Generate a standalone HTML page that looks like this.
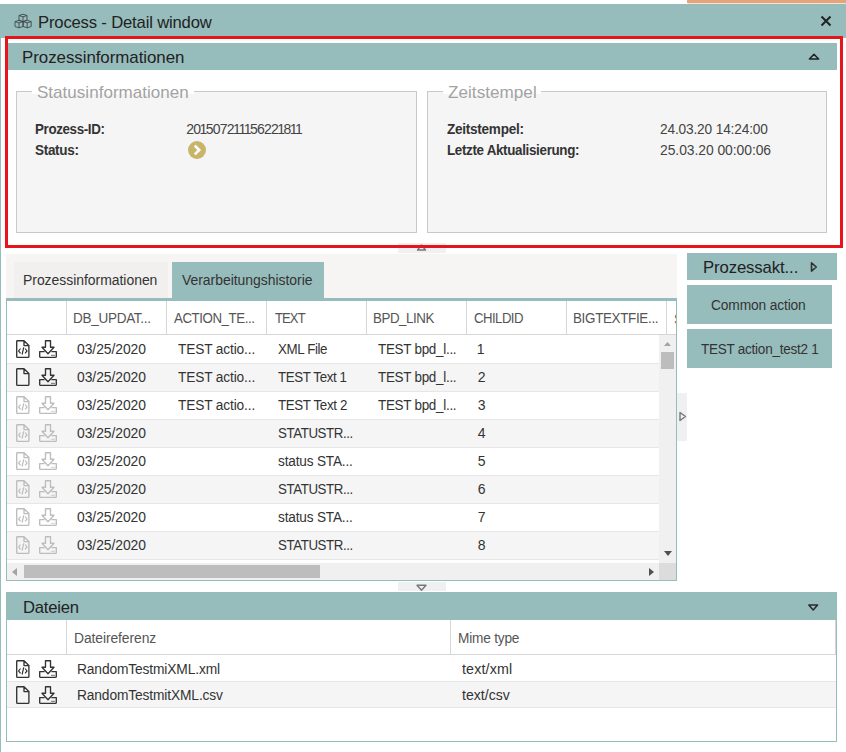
<!DOCTYPE html>
<html><head><meta charset="utf-8">
<style>
*{box-sizing:border-box;margin:0;padding:0}
html,body{width:846px;height:752px;overflow:hidden;background:#fff;font-family:"Liberation Sans",sans-serif;color:#333}
.a{position:absolute}
.t{position:absolute;white-space:nowrap;line-height:1}
svg{overflow:visible}
</style></head><body>
<div class="a" style="left:687px;top:0px;width:159px;height:3px;background:#e6a47a"></div>
<div class="a" style="left:688px;top:3px;width:158px;height:1px;background:#f3e2d6"></div>
<div class="a" style="left:0px;top:4px;width:846px;height:34px;background:#97bcbc"></div>
<svg class="a" style="left:14px;top:12px" width="18" height="17" viewBox="0 0 18 17"><path d="M5 3.5 L9 2.2 L13 3.5 L9 4.800000000000001 Z M5 3.5 V8.4 L9 9.7 L13 8.4 V3.5 M9 4.800000000000001 V9.7" fill="none" stroke="#3a4242" stroke-width="0.85" stroke-linejoin="round"/><path d="M1 9.600000000000001 L5 8.3 L9 9.600000000000001 L5 10.9 Z M1 9.600000000000001 V14.5 L5 15.8 L9 14.5 V9.600000000000001 M5 10.9 V15.8" fill="none" stroke="#3a4242" stroke-width="0.85" stroke-linejoin="round"/><path d="M9.2 9.600000000000001 L13.2 8.3 L17.2 9.600000000000001 L13.2 10.9 Z M9.2 9.600000000000001 V14.5 L13.2 15.8 L17.2 14.5 V9.600000000000001 M13.2 10.9 V15.8" fill="none" stroke="#3a4242" stroke-width="0.85" stroke-linejoin="round"/></svg>
<div class="t" style="left:38.42px;top:13.51px;font-size:17px;color:#222;font-weight:normal;letter-spacing:-0.177px;transform:scaleX(0.9790);transform-origin:0 0;">Process - Detail window</div>
<svg class="a" style="left:820px;top:15px" width="12" height="12" viewBox="0 0 12 12"><path d="M1.5 1.5L10.5 10.5M10.5 1.5L1.5 10.5" stroke="#222" stroke-width="2"/></svg>
<div class="a" style="left:0px;top:38px;width:1px;height:714px;background:#97bcbc"></div>
<div class="a" style="left:8px;top:43px;width:829px;height:27px;background:#97bcbc"></div>
<div class="t" style="left:21.51px;top:49.11px;font-size:17px;color:#222;font-weight:normal;letter-spacing:-0.052px;transform:scaleX(0.9940);transform-origin:0 0;">Prozessinformationen</div>
<svg class="a" style="left:808px;top:52px" width="12" height="9" viewBox="0 0 12 9"><path d="M6 2.3L10.6 7.1H1.4Z" fill="none" stroke="#222" stroke-width="1.5" stroke-linejoin="round"/></svg>
<div class="a" style="left:16px;top:91px;width:401px;height:142px;background:#f5f5f5;border:1px solid #c9c9c9"></div>
<div class="a" style="left:32px;top:84px;width:162px;height:10px;background:#fff"></div>
<div class="t" style="left:37.20px;top:83.61px;font-size:17px;color:#a3a3a3;font-weight:normal;letter-spacing:0.015px;transform:scaleX(1.0018);transform-origin:0 0;">Statusinformationen</div>
<div class="t" style="left:35.30px;top:122.25px;font-size:14px;color:#333;font-weight:bold;letter-spacing:-0.370px;transform:scaleX(0.9538);transform-origin:0 0;">Prozess-ID:</div>
<div class="t" style="left:35.30px;top:143.15px;font-size:14px;color:#333;font-weight:bold;letter-spacing:-0.302px;transform:scaleX(0.9627);transform-origin:0 0;">Status:</div>
<div class="t" style="left:186.30px;top:122.15px;font-size:14px;color:#444;font-weight:normal;letter-spacing:-0.750px;">20<span style="margin:0 -0.85px">1</span>5072<span style="margin:0 -0.85px">1</span><span style="margin:0 -0.85px">1</span><span style="margin:0 -0.85px">1</span>5622<span style="margin:0 -0.85px">1</span>8<span style="margin:0 -0.85px">1</span><span style="margin:0 -0.85px">1</span></div>
<svg class="a" style="left:188px;top:141px" width="18" height="18" viewBox="0 0 18 18"><circle cx="9" cy="9" r="9" fill="#c9b46a"/><path d="M6.8 4.6L11.2 9L6.8 13.4" fill="none" stroke="#fff" stroke-width="2.6"/></svg>
<div class="a" style="left:427px;top:91px;width:400px;height:142px;background:#f5f5f5;border:1px solid #c9c9c9"></div>
<div class="a" style="left:443px;top:84px;width:98px;height:10px;background:#fff"></div>
<div class="t" style="left:448.40px;top:83.61px;font-size:17px;color:#a3a3a3;font-weight:normal;letter-spacing:0.040px;transform:scaleX(1.0047);transform-origin:0 0;">Zeitstempel</div>
<div class="t" style="left:446.50px;top:122.15px;font-size:14px;color:#333;font-weight:bold;letter-spacing:-0.259px;transform:scaleX(0.9664);transform-origin:0 0;">Zeitstempel:</div>
<div class="t" style="left:446.50px;top:143.15px;font-size:14px;color:#333;font-weight:bold;letter-spacing:-0.329px;transform:scaleX(0.9547);transform-origin:0 0;">Letzte Aktualisierung:</div>
<div class="t" style="left:660.20px;top:122.15px;font-size:14px;color:#444;font-weight:normal;letter-spacing:-0.160px;transform:scaleX(0.9779);transform-origin:0 0;">24.03.20 14:24:00</div>
<div class="t" style="left:660.20px;top:143.15px;font-size:14px;color:#444;font-weight:normal;letter-spacing:-0.057px;transform:scaleX(0.9921);transform-origin:0 0;">25.03.20 00:00:06</div>
<div class="a" style="left:398px;top:243px;width:48px;height:10px;background:#f0f0f0"></div>
<svg class="a" style="left:416px;top:244px" width="11" height="7" viewBox="0 0 11 7"><path d="M5.5 1L9.5 6H1.5Z" fill="none" stroke="#777" stroke-width="1.4" stroke-linejoin="round"/></svg>
<div class="a" style="left:5px;top:36px;width:838px;height:212px;border:3px solid #e8141c"></div>
<div class="a" style="left:6px;top:254px;width:671px;height:44px;background:#f6f5f3"></div>
<div class="a" style="left:14px;top:262px;width:154px;height:36px;background:#f1f0ee"></div>
<div class="t" style="left:23.40px;top:272.95px;font-size:14px;color:#333;font-weight:normal;letter-spacing:-0.027px;transform:scaleX(0.9962);transform-origin:0 0;">Prozessinformationen</div>
<div class="a" style="left:172px;top:262px;width:152px;height:36px;background:#97bcbc"></div>
<div class="t" style="left:182.40px;top:273.15px;font-size:14px;color:#333;font-weight:normal;letter-spacing:-0.026px;transform:scaleX(0.9961);transform-origin:0 0;">Verarbeitungshistorie</div>
<div class="a" style="left:6px;top:298px;width:671px;height:283px;border:1px solid #97bcbc;border-top:3px solid #97bcbc;background:#fff"></div>
<div class="a" style="left:7px;top:334px;width:669px;height:1px;background:#d6d6d6"></div>
<div class="a" style="left:66px;top:301px;width:1px;height:33px;background:#d6d6d6"></div>
<div class="a" style="left:166px;top:301px;width:1px;height:33px;background:#d6d6d6"></div>
<div class="a" style="left:266px;top:301px;width:1px;height:33px;background:#d6d6d6"></div>
<div class="a" style="left:366px;top:301px;width:1px;height:33px;background:#d6d6d6"></div>
<div class="a" style="left:466px;top:301px;width:1px;height:33px;background:#d6d6d6"></div>
<div class="a" style="left:566px;top:301px;width:1px;height:33px;background:#d6d6d6"></div>
<div class="a" style="left:666px;top:301px;width:1px;height:33px;background:#d6d6d6"></div>
<div class="t" style="left:73.23px;top:311.05px;font-size:14px;color:#555;font-weight:normal;letter-spacing:-0.294px;transform:scaleX(0.9654);transform-origin:0 0;">DB_UPDAT...</div>
<div class="t" style="left:174.20px;top:311.05px;font-size:14px;color:#555;font-weight:normal;letter-spacing:-0.448px;transform:scaleX(0.9477);transform-origin:0 0;">ACTION_TE...</div>
<div class="t" style="left:274.50px;top:311.05px;font-size:14px;color:#555;font-weight:normal;letter-spacing:-0.939px;transform:scaleX(0.9279);transform-origin:0 0;">TEXT</div>
<div class="t" style="left:373.35px;top:311.05px;font-size:14px;color:#555;font-weight:normal;letter-spacing:-0.477px;transform:scaleX(0.9528);transform-origin:0 0;">BPD_LINK</div>
<div class="t" style="left:474.40px;top:311.05px;font-size:14px;color:#555;font-weight:normal;letter-spacing:-0.575px;transform:scaleX(0.9419);transform-origin:0 0;">CHILDID</div>
<div class="t" style="left:573.44px;top:311.05px;font-size:14px;color:#555;font-weight:normal;letter-spacing:-0.337px;transform:scaleX(0.9576);transform-origin:0 0;">BIGTEXTFIE...</div>
<div class="a" style="left:667px;top:301px;width:9px;height:33px;overflow:hidden"><div class="t" style="left:7px;top:10.5px;font-size:14px;color:#555">S</div></div>
<div class="a" style="left:7px;top:336px;width:652px;height:28px;background:#fff;border-bottom:1px solid #e6e6e6"></div>
<svg class="a" style="left:16px;top:340px" width="14" height="18" viewBox="0 0 14 18"><path d="M1.5 0.7H8L12.9 5.6V16.4Q12.9 17.3 12 17.3H1.5Q0.7 17.3 0.7 16.4V1.5Q0.7 0.7 1.5 0.7Z M8 0.7V5.6H12.9" fill="none" stroke="#333" stroke-width="1.35" stroke-linejoin="round"/><path d="M4.5 8.5L2.6 10.9L4.5 13.3M9.1 8.5L11 10.9L9.1 13.3M7.7 7.3L6.1 14.5" fill="none" stroke="#333" stroke-width="1.2"/></svg>
<svg class="a" style="left:39px;top:340px" width="18" height="18" viewBox="0 0 18 18"><path d="M6.5 0.7H11.5V7.2H15L9 13.8L3 7.2H6.5Z" fill="none" stroke="#333" stroke-width="1.35" stroke-linejoin="round"/><path d="M5.6 11.6H0.7V16.4Q0.7 17.3 1.6 17.3H16.4Q17.3 17.3 17.3 16.4V11.6H12.4" fill="none" stroke="#333" stroke-width="1.35" stroke-linejoin="round"/><path d="M12.2 15.3H15.8" stroke="#333" stroke-width="0.9" stroke-dasharray="1.6 0.4"/></svg>
<div class="t" style="left:77.00px;top:342.15px;font-size:14px;color:#333;font-weight:normal;letter-spacing:-0.061px;transform:scaleX(0.9923);transform-origin:0 0;">03/25/2020</div>
<div class="t" style="left:177.70px;top:342.15px;font-size:14px;color:#333;font-weight:normal;letter-spacing:-0.146px;transform:scaleX(0.9786);transform-origin:0 0;">TEST actio...</div>
<div class="t" style="left:277.70px;top:342.15px;font-size:14px;color:#333;font-weight:normal;letter-spacing:-0.393px;transform:scaleX(0.9527);transform-origin:0 0;">XML File</div>
<div class="t" style="left:377.70px;top:342.15px;font-size:14px;color:#333;font-weight:normal;letter-spacing:-0.291px;transform:scaleX(0.9604);transform-origin:0 0;">TEST bpd_l...</div>
<div class="t" style="left:476.80px;top:342.15px;font-size:14px;color:#333;font-weight:normal;letter-spacing:0.000px;">1</div>
<div class="a" style="left:7px;top:364px;width:652px;height:28px;background:#f5f5f5;border-bottom:1px solid #e6e6e6"></div>
<svg class="a" style="left:16px;top:368px" width="14" height="18" viewBox="0 0 14 18"><path d="M1.5 0.7H8L12.9 5.6V16.4Q12.9 17.3 12 17.3H1.5Q0.7 17.3 0.7 16.4V1.5Q0.7 0.7 1.5 0.7Z M8 0.7V5.6H12.9" fill="none" stroke="#333" stroke-width="1.35" stroke-linejoin="round"/></svg>
<svg class="a" style="left:39px;top:368px" width="18" height="18" viewBox="0 0 18 18"><path d="M6.5 0.7H11.5V7.2H15L9 13.8L3 7.2H6.5Z" fill="none" stroke="#333" stroke-width="1.35" stroke-linejoin="round"/><path d="M5.6 11.6H0.7V16.4Q0.7 17.3 1.6 17.3H16.4Q17.3 17.3 17.3 16.4V11.6H12.4" fill="none" stroke="#333" stroke-width="1.35" stroke-linejoin="round"/><path d="M12.2 15.3H15.8" stroke="#333" stroke-width="0.9" stroke-dasharray="1.6 0.4"/></svg>
<div class="t" style="left:77.00px;top:370.15px;font-size:14px;color:#333;font-weight:normal;letter-spacing:-0.061px;transform:scaleX(0.9923);transform-origin:0 0;">03/25/2020</div>
<div class="t" style="left:177.70px;top:370.15px;font-size:14px;color:#333;font-weight:normal;letter-spacing:-0.146px;transform:scaleX(0.9786);transform-origin:0 0;">TEST actio...</div>
<div class="t" style="left:277.70px;top:370.15px;font-size:14px;color:#333;font-weight:normal;letter-spacing:-0.396px;transform:scaleX(0.9512);transform-origin:0 0;">TEST Text 1</div>
<div class="t" style="left:377.70px;top:370.15px;font-size:14px;color:#333;font-weight:normal;letter-spacing:-0.291px;transform:scaleX(0.9604);transform-origin:0 0;">TEST bpd_l...</div>
<div class="t" style="left:477.80px;top:370.15px;font-size:14px;color:#333;font-weight:normal;letter-spacing:0.000px;">2</div>
<div class="a" style="left:7px;top:392px;width:652px;height:28px;background:#fff;border-bottom:1px solid #e6e6e6"></div>
<svg class="a" style="left:16px;top:396px" width="14" height="18" viewBox="0 0 14 18"><path d="M1.5 0.7H8L12.9 5.6V16.4Q12.9 17.3 12 17.3H1.5Q0.7 17.3 0.7 16.4V1.5Q0.7 0.7 1.5 0.7Z M8 0.7V5.6H12.9" fill="none" stroke="#bdbdbd" stroke-width="1.35" stroke-linejoin="round"/><path d="M4.5 8.5L2.6 10.9L4.5 13.3M9.1 8.5L11 10.9L9.1 13.3M7.7 7.3L6.1 14.5" fill="none" stroke="#bdbdbd" stroke-width="1.2"/></svg>
<svg class="a" style="left:39px;top:396px" width="18" height="18" viewBox="0 0 18 18"><path d="M6.5 0.7H11.5V7.2H15L9 13.8L3 7.2H6.5Z" fill="none" stroke="#bdbdbd" stroke-width="1.35" stroke-linejoin="round"/><path d="M5.6 11.6H0.7V16.4Q0.7 17.3 1.6 17.3H16.4Q17.3 17.3 17.3 16.4V11.6H12.4" fill="none" stroke="#bdbdbd" stroke-width="1.35" stroke-linejoin="round"/><path d="M12.2 15.3H15.8" stroke="#bdbdbd" stroke-width="0.9" stroke-dasharray="1.6 0.4"/></svg>
<div class="t" style="left:77.00px;top:398.15px;font-size:14px;color:#333;font-weight:normal;letter-spacing:-0.061px;transform:scaleX(0.9923);transform-origin:0 0;">03/25/2020</div>
<div class="t" style="left:177.70px;top:398.15px;font-size:14px;color:#333;font-weight:normal;letter-spacing:-0.146px;transform:scaleX(0.9786);transform-origin:0 0;">TEST actio...</div>
<div class="t" style="left:277.70px;top:398.15px;font-size:14px;color:#333;font-weight:normal;letter-spacing:-0.379px;transform:scaleX(0.9532);transform-origin:0 0;">TEST Text 2</div>
<div class="t" style="left:377.70px;top:398.15px;font-size:14px;color:#333;font-weight:normal;letter-spacing:-0.291px;transform:scaleX(0.9604);transform-origin:0 0;">TEST bpd_l...</div>
<div class="t" style="left:477.80px;top:398.15px;font-size:14px;color:#333;font-weight:normal;letter-spacing:0.000px;">3</div>
<div class="a" style="left:7px;top:420px;width:652px;height:28px;background:#f5f5f5;border-bottom:1px solid #e6e6e6"></div>
<svg class="a" style="left:16px;top:424px" width="14" height="18" viewBox="0 0 14 18"><path d="M1.5 0.7H8L12.9 5.6V16.4Q12.9 17.3 12 17.3H1.5Q0.7 17.3 0.7 16.4V1.5Q0.7 0.7 1.5 0.7Z M8 0.7V5.6H12.9" fill="none" stroke="#bdbdbd" stroke-width="1.35" stroke-linejoin="round"/><path d="M4.5 8.5L2.6 10.9L4.5 13.3M9.1 8.5L11 10.9L9.1 13.3M7.7 7.3L6.1 14.5" fill="none" stroke="#bdbdbd" stroke-width="1.2"/></svg>
<svg class="a" style="left:39px;top:424px" width="18" height="18" viewBox="0 0 18 18"><path d="M6.5 0.7H11.5V7.2H15L9 13.8L3 7.2H6.5Z" fill="none" stroke="#bdbdbd" stroke-width="1.35" stroke-linejoin="round"/><path d="M5.6 11.6H0.7V16.4Q0.7 17.3 1.6 17.3H16.4Q17.3 17.3 17.3 16.4V11.6H12.4" fill="none" stroke="#bdbdbd" stroke-width="1.35" stroke-linejoin="round"/><path d="M12.2 15.3H15.8" stroke="#bdbdbd" stroke-width="0.9" stroke-dasharray="1.6 0.4"/></svg>
<div class="t" style="left:77.00px;top:426.15px;font-size:14px;color:#333;font-weight:normal;letter-spacing:-0.061px;transform:scaleX(0.9923);transform-origin:0 0;">03/25/2020</div>
<div class="t" style="left:277.70px;top:426.15px;font-size:14px;color:#333;font-weight:normal;letter-spacing:-0.431px;transform:scaleX(0.9504);transform-origin:0 0;">STATUSTR...</div>
<div class="t" style="left:477.80px;top:426.15px;font-size:14px;color:#333;font-weight:normal;letter-spacing:0.000px;">4</div>
<div class="a" style="left:7px;top:448px;width:652px;height:28px;background:#fff;border-bottom:1px solid #e6e6e6"></div>
<svg class="a" style="left:16px;top:452px" width="14" height="18" viewBox="0 0 14 18"><path d="M1.5 0.7H8L12.9 5.6V16.4Q12.9 17.3 12 17.3H1.5Q0.7 17.3 0.7 16.4V1.5Q0.7 0.7 1.5 0.7Z M8 0.7V5.6H12.9" fill="none" stroke="#bdbdbd" stroke-width="1.35" stroke-linejoin="round"/><path d="M4.5 8.5L2.6 10.9L4.5 13.3M9.1 8.5L11 10.9L9.1 13.3M7.7 7.3L6.1 14.5" fill="none" stroke="#bdbdbd" stroke-width="1.2"/></svg>
<svg class="a" style="left:39px;top:452px" width="18" height="18" viewBox="0 0 18 18"><path d="M6.5 0.7H11.5V7.2H15L9 13.8L3 7.2H6.5Z" fill="none" stroke="#bdbdbd" stroke-width="1.35" stroke-linejoin="round"/><path d="M5.6 11.6H0.7V16.4Q0.7 17.3 1.6 17.3H16.4Q17.3 17.3 17.3 16.4V11.6H12.4" fill="none" stroke="#bdbdbd" stroke-width="1.35" stroke-linejoin="round"/><path d="M12.2 15.3H15.8" stroke="#bdbdbd" stroke-width="0.9" stroke-dasharray="1.6 0.4"/></svg>
<div class="t" style="left:77.00px;top:454.15px;font-size:14px;color:#333;font-weight:normal;letter-spacing:-0.061px;transform:scaleX(0.9923);transform-origin:0 0;">03/25/2020</div>
<div class="t" style="left:277.70px;top:454.15px;font-size:14px;color:#333;font-weight:normal;letter-spacing:-0.180px;transform:scaleX(0.9731);transform-origin:0 0;">status STA...</div>
<div class="t" style="left:477.80px;top:454.15px;font-size:14px;color:#333;font-weight:normal;letter-spacing:0.000px;">5</div>
<div class="a" style="left:7px;top:476px;width:652px;height:28px;background:#f5f5f5;border-bottom:1px solid #e6e6e6"></div>
<svg class="a" style="left:16px;top:480px" width="14" height="18" viewBox="0 0 14 18"><path d="M1.5 0.7H8L12.9 5.6V16.4Q12.9 17.3 12 17.3H1.5Q0.7 17.3 0.7 16.4V1.5Q0.7 0.7 1.5 0.7Z M8 0.7V5.6H12.9" fill="none" stroke="#bdbdbd" stroke-width="1.35" stroke-linejoin="round"/><path d="M4.5 8.5L2.6 10.9L4.5 13.3M9.1 8.5L11 10.9L9.1 13.3M7.7 7.3L6.1 14.5" fill="none" stroke="#bdbdbd" stroke-width="1.2"/></svg>
<svg class="a" style="left:39px;top:480px" width="18" height="18" viewBox="0 0 18 18"><path d="M6.5 0.7H11.5V7.2H15L9 13.8L3 7.2H6.5Z" fill="none" stroke="#bdbdbd" stroke-width="1.35" stroke-linejoin="round"/><path d="M5.6 11.6H0.7V16.4Q0.7 17.3 1.6 17.3H16.4Q17.3 17.3 17.3 16.4V11.6H12.4" fill="none" stroke="#bdbdbd" stroke-width="1.35" stroke-linejoin="round"/><path d="M12.2 15.3H15.8" stroke="#bdbdbd" stroke-width="0.9" stroke-dasharray="1.6 0.4"/></svg>
<div class="t" style="left:77.00px;top:482.15px;font-size:14px;color:#333;font-weight:normal;letter-spacing:-0.061px;transform:scaleX(0.9923);transform-origin:0 0;">03/25/2020</div>
<div class="t" style="left:277.70px;top:482.15px;font-size:14px;color:#333;font-weight:normal;letter-spacing:-0.431px;transform:scaleX(0.9504);transform-origin:0 0;">STATUSTR...</div>
<div class="t" style="left:477.80px;top:482.15px;font-size:14px;color:#333;font-weight:normal;letter-spacing:0.000px;">6</div>
<div class="a" style="left:7px;top:504px;width:652px;height:28px;background:#fff;border-bottom:1px solid #e6e6e6"></div>
<svg class="a" style="left:16px;top:508px" width="14" height="18" viewBox="0 0 14 18"><path d="M1.5 0.7H8L12.9 5.6V16.4Q12.9 17.3 12 17.3H1.5Q0.7 17.3 0.7 16.4V1.5Q0.7 0.7 1.5 0.7Z M8 0.7V5.6H12.9" fill="none" stroke="#bdbdbd" stroke-width="1.35" stroke-linejoin="round"/><path d="M4.5 8.5L2.6 10.9L4.5 13.3M9.1 8.5L11 10.9L9.1 13.3M7.7 7.3L6.1 14.5" fill="none" stroke="#bdbdbd" stroke-width="1.2"/></svg>
<svg class="a" style="left:39px;top:508px" width="18" height="18" viewBox="0 0 18 18"><path d="M6.5 0.7H11.5V7.2H15L9 13.8L3 7.2H6.5Z" fill="none" stroke="#bdbdbd" stroke-width="1.35" stroke-linejoin="round"/><path d="M5.6 11.6H0.7V16.4Q0.7 17.3 1.6 17.3H16.4Q17.3 17.3 17.3 16.4V11.6H12.4" fill="none" stroke="#bdbdbd" stroke-width="1.35" stroke-linejoin="round"/><path d="M12.2 15.3H15.8" stroke="#bdbdbd" stroke-width="0.9" stroke-dasharray="1.6 0.4"/></svg>
<div class="t" style="left:77.00px;top:510.15px;font-size:14px;color:#333;font-weight:normal;letter-spacing:-0.061px;transform:scaleX(0.9923);transform-origin:0 0;">03/25/2020</div>
<div class="t" style="left:277.70px;top:510.15px;font-size:14px;color:#333;font-weight:normal;letter-spacing:-0.180px;transform:scaleX(0.9731);transform-origin:0 0;">status STA...</div>
<div class="t" style="left:477.80px;top:510.15px;font-size:14px;color:#333;font-weight:normal;letter-spacing:0.000px;">7</div>
<div class="a" style="left:7px;top:532px;width:652px;height:28px;background:#f5f5f5;border-bottom:1px solid #e6e6e6"></div>
<svg class="a" style="left:16px;top:536px" width="14" height="18" viewBox="0 0 14 18"><path d="M1.5 0.7H8L12.9 5.6V16.4Q12.9 17.3 12 17.3H1.5Q0.7 17.3 0.7 16.4V1.5Q0.7 0.7 1.5 0.7Z M8 0.7V5.6H12.9" fill="none" stroke="#bdbdbd" stroke-width="1.35" stroke-linejoin="round"/><path d="M4.5 8.5L2.6 10.9L4.5 13.3M9.1 8.5L11 10.9L9.1 13.3M7.7 7.3L6.1 14.5" fill="none" stroke="#bdbdbd" stroke-width="1.2"/></svg>
<svg class="a" style="left:39px;top:536px" width="18" height="18" viewBox="0 0 18 18"><path d="M6.5 0.7H11.5V7.2H15L9 13.8L3 7.2H6.5Z" fill="none" stroke="#bdbdbd" stroke-width="1.35" stroke-linejoin="round"/><path d="M5.6 11.6H0.7V16.4Q0.7 17.3 1.6 17.3H16.4Q17.3 17.3 17.3 16.4V11.6H12.4" fill="none" stroke="#bdbdbd" stroke-width="1.35" stroke-linejoin="round"/><path d="M12.2 15.3H15.8" stroke="#bdbdbd" stroke-width="0.9" stroke-dasharray="1.6 0.4"/></svg>
<div class="t" style="left:77.00px;top:538.15px;font-size:14px;color:#333;font-weight:normal;letter-spacing:-0.061px;transform:scaleX(0.9923);transform-origin:0 0;">03/25/2020</div>
<div class="t" style="left:277.70px;top:538.15px;font-size:14px;color:#333;font-weight:normal;letter-spacing:-0.431px;transform:scaleX(0.9504);transform-origin:0 0;">STATUSTR...</div>
<div class="t" style="left:477.80px;top:538.15px;font-size:14px;color:#333;font-weight:normal;letter-spacing:0.000px;">8</div>
<div class="a" style="left:659px;top:335px;width:17px;height:228px;background:#f0f0f0"></div>
<svg class="a" style="left:664px;top:342px" width="7" height="4" viewBox="0 0 7 4"><path d="M3.5 0L7 4H0Z" fill="#a3a3a3"/></svg>
<div class="a" style="left:661px;top:352px;width:13px;height:17px;background:#bdbdbd"></div>
<svg class="a" style="left:664px;top:551px" width="8" height="5" viewBox="0 0 8 5"><path d="M0 0H8L4 5Z" fill="#505050"/></svg>
<div class="a" style="left:7px;top:560px;width:652px;height:3px;background:#fff"></div>
<div class="a" style="left:7px;top:563px;width:652px;height:17px;background:#f0f0f0"></div>
<svg class="a" style="left:12px;top:568px" width="5" height="8" viewBox="0 0 5 8"><path d="M5 0V8L0 4Z" fill="#a3a3a3"/></svg>
<div class="a" style="left:24px;top:565px;width:296px;height:13px;background:#bdbdbd"></div>
<svg class="a" style="left:649px;top:568px" width="5" height="8" viewBox="0 0 5 8"><path d="M0 0V8L5 4Z" fill="#505050"/></svg>
<div class="a" style="left:659px;top:563px;width:17px;height:17px;background:#dcdcdc"></div>
<div class="a" style="left:687px;top:253px;width:150px;height:27px;background:#97bcbc"></div>
<div class="t" style="left:702.62px;top:259.21px;font-size:17px;color:#222;font-weight:normal;letter-spacing:-0.124px;transform:scaleX(0.9848);transform-origin:0 0;">Prozessakt...</div>
<svg class="a" style="left:810px;top:262px" width="8" height="10" viewBox="0 0 8 10"><path d="M1.5 0.9L6.3 5L1.5 9.1Z" fill="none" stroke="#2e3434" stroke-width="1.6" stroke-linejoin="round"/></svg>
<div class="a" style="left:687px;top:285px;width:145px;height:39px;background:#97bcbc"></div>
<div class="t" style="left:711.30px;top:298.15px;font-size:14px;color:#333;font-weight:normal;letter-spacing:-0.138px;transform:scaleX(0.9833);transform-origin:0 0;">Common action</div>
<div class="a" style="left:687px;top:329px;width:145px;height:39px;background:#97bcbc"></div>
<div class="t" style="left:701.10px;top:341.75px;font-size:14px;color:#333;font-weight:normal;letter-spacing:-0.255px;transform:scaleX(0.9652);transform-origin:0 0;">TEST action_test2 1</div>
<div class="a" style="left:677px;top:393px;width:10px;height:48px;background:#f0f0f0"></div>
<svg class="a" style="left:679px;top:411px" width="8" height="11" viewBox="0 0 8 11"><path d="M1 1.5L6.5 5.5L1 9.5Z" fill="none" stroke="#777" stroke-width="1.4" stroke-linejoin="round"/></svg>
<div class="a" style="left:398px;top:582px;width:48px;height:9px;background:#f0f0f0"></div>
<svg class="a" style="left:416px;top:584px" width="11" height="7" viewBox="0 0 11 7"><path d="M1 1.2H10L5.5 6.2Z" fill="none" stroke="#777" stroke-width="1.4" stroke-linejoin="round"/></svg>
<div class="a" style="left:6px;top:592px;width:831px;height:28px;background:#97bcbc"></div>
<div class="t" style="left:23.02px;top:599.11px;font-size:17px;color:#222;font-weight:normal;letter-spacing:-0.217px;transform:scaleX(0.9778);transform-origin:0 0;">Dateien</div>
<svg class="a" style="left:807px;top:603px" width="12" height="9" viewBox="0 0 12 9"><path d="M1.8 2H10.6L6.2 6.9Z" fill="none" stroke="#2a2a2a" stroke-width="1.5" stroke-linejoin="round"/></svg>
<div class="a" style="left:6px;top:620px;width:831px;height:122px;border:1px solid #97bcbc;border-top:none;background:#fff"></div>
<div class="a" style="left:7px;top:654px;width:829px;height:1px;background:#d6d6d6"></div>
<div class="a" style="left:835px;top:620px;width:1px;height:34px;background:#d6d6d6"></div>
<div class="a" style="left:66px;top:620px;width:1px;height:34px;background:#d6d6d6"></div>
<div class="a" style="left:450px;top:620px;width:1px;height:34px;background:#d6d6d6"></div>
<div class="t" style="left:73.51px;top:631.05px;font-size:14px;color:#555;font-weight:normal;letter-spacing:-0.078px;transform:scaleX(0.9889);transform-origin:0 0;">Dateireferenz</div>
<div class="t" style="left:457.72px;top:630.85px;font-size:14px;color:#555;font-weight:normal;letter-spacing:-0.198px;transform:scaleX(0.9758);transform-origin:0 0;">Mime type</div>
<div class="a" style="left:7px;top:655px;width:829px;height:27px;background:#fff;border-bottom:1px solid #e6e6e6"></div>
<svg class="a" style="left:16px;top:660px" width="14" height="18" viewBox="0 0 14 18"><path d="M1.5 0.7H8L12.9 5.6V16.4Q12.9 17.3 12 17.3H1.5Q0.7 17.3 0.7 16.4V1.5Q0.7 0.7 1.5 0.7Z M8 0.7V5.6H12.9" fill="none" stroke="#333" stroke-width="1.35" stroke-linejoin="round"/><path d="M4.5 8.5L2.6 10.9L4.5 13.3M9.1 8.5L11 10.9L9.1 13.3M7.7 7.3L6.1 14.5" fill="none" stroke="#333" stroke-width="1.2"/></svg>
<svg class="a" style="left:39px;top:660px" width="18" height="18" viewBox="0 0 18 18"><path d="M6.5 0.7H11.5V7.2H15L9 13.8L3 7.2H6.5Z" fill="none" stroke="#333" stroke-width="1.35" stroke-linejoin="round"/><path d="M5.6 11.6H0.7V16.4Q0.7 17.3 1.6 17.3H16.4Q17.3 17.3 17.3 16.4V11.6H12.4" fill="none" stroke="#333" stroke-width="1.35" stroke-linejoin="round"/><path d="M12.2 15.3H15.8" stroke="#333" stroke-width="0.9" stroke-dasharray="1.6 0.4"/></svg>
<div class="t" style="left:76.72px;top:662.25px;font-size:14px;color:#333;font-weight:normal;letter-spacing:-0.133px;transform:scaleX(0.9840);transform-origin:0 0;">RandomTestmiXML.xml</div>
<div class="t" style="left:461.60px;top:662.25px;font-size:14px;color:#333;font-weight:normal;letter-spacing:0.132px;transform:scaleX(1.0196);transform-origin:0 0;">text/xml</div>
<div class="a" style="left:7px;top:682px;width:829px;height:26px;background:#f5f5f5;border-bottom:1px solid #e6e6e6"></div>
<svg class="a" style="left:16px;top:686px" width="14" height="18" viewBox="0 0 14 18"><path d="M1.5 0.7H8L12.9 5.6V16.4Q12.9 17.3 12 17.3H1.5Q0.7 17.3 0.7 16.4V1.5Q0.7 0.7 1.5 0.7Z M8 0.7V5.6H12.9" fill="none" stroke="#333" stroke-width="1.35" stroke-linejoin="round"/></svg>
<svg class="a" style="left:39px;top:686px" width="18" height="18" viewBox="0 0 18 18"><path d="M6.5 0.7H11.5V7.2H15L9 13.8L3 7.2H6.5Z" fill="none" stroke="#333" stroke-width="1.35" stroke-linejoin="round"/><path d="M5.6 11.6H0.7V16.4Q0.7 17.3 1.6 17.3H16.4Q17.3 17.3 17.3 16.4V11.6H12.4" fill="none" stroke="#333" stroke-width="1.35" stroke-linejoin="round"/><path d="M12.2 15.3H15.8" stroke="#333" stroke-width="0.9" stroke-dasharray="1.6 0.4"/></svg>
<div class="t" style="left:76.72px;top:687.85px;font-size:14px;color:#333;font-weight:normal;letter-spacing:-0.132px;transform:scaleX(0.9836);transform-origin:0 0;">RandomTestmitXML.csv</div>
<div class="t" style="left:461.60px;top:687.85px;font-size:14px;color:#333;font-weight:normal;letter-spacing:0.032px;transform:scaleX(1.0047);transform-origin:0 0;">text/csv</div>
</body></html>
